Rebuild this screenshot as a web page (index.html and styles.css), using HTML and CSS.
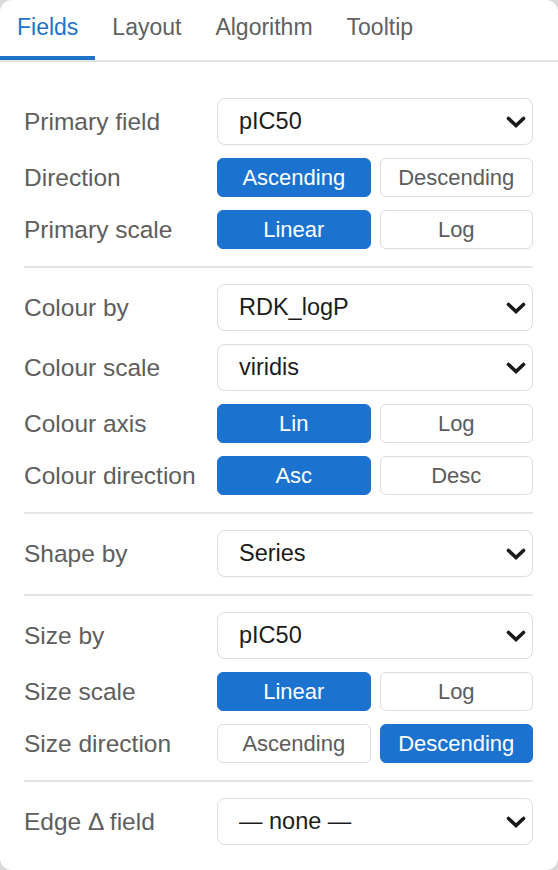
FILE: index.html
```html
<!DOCTYPE html>
<html lang="en">
<head>
<meta charset="utf-8">
<title>Fields</title>
<link rel="stylesheet" href="styles.css">
</head>
<body>
<div class="panel">
  <nav class="tabs">
    <div class="tab active">Fields</div>
    <div class="tab">Layout</div>
    <div class="tab">Algorithm</div>
    <div class="tab">Tooltip</div>
  </nav>
  <div class="form">
    <section class="group">
      <span class="label">Primary field</span>
      <div class="select"><span>pIC50</span><svg class="chev" viewBox="0 0 20 12"><path d="M2.5 2.5 L10 9.5 L17.5 2.5"/></svg></div>
      <span class="label">Direction</span>
      <div class="seg"><button class="btn on">Ascending</button><button class="btn">Descending</button></div>
      <span class="label">Primary scale</span>
      <div class="seg"><button class="btn on">Linear</button><button class="btn">Log</button></div>
    </section>
    <section class="group">
      <span class="label">Colour by</span>
      <div class="select"><span>RDK_logP</span><svg class="chev" viewBox="0 0 20 12"><path d="M2.5 2.5 L10 9.5 L17.5 2.5"/></svg></div>
      <span class="label">Colour scale</span>
      <div class="select"><span>viridis</span><svg class="chev" viewBox="0 0 20 12"><path d="M2.5 2.5 L10 9.5 L17.5 2.5"/></svg></div>
      <span class="label">Colour axis</span>
      <div class="seg"><button class="btn on">Lin</button><button class="btn">Log</button></div>
      <span class="label">Colour direction</span>
      <div class="seg"><button class="btn on">Asc</button><button class="btn">Desc</button></div>
    </section>
    <section class="group">
      <span class="label">Shape by</span>
      <div class="select"><span>Series</span><svg class="chev" viewBox="0 0 20 12"><path d="M2.5 2.5 L10 9.5 L17.5 2.5"/></svg></div>
    </section>
    <section class="group">
      <span class="label">Size by</span>
      <div class="select"><span>pIC50</span><svg class="chev" viewBox="0 0 20 12"><path d="M2.5 2.5 L10 9.5 L17.5 2.5"/></svg></div>
      <span class="label">Size scale</span>
      <div class="seg"><button class="btn on">Linear</button><button class="btn">Log</button></div>
      <span class="label">Size direction</span>
      <div class="seg"><button class="btn">Ascending</button><button class="btn on">Descending</button></div>
    </section>
    <section class="group">
      <span class="label">Edge Δ field</span>
      <div class="select"><span>— none —</span><svg class="chev" viewBox="0 0 20 12"><path d="M2.5 2.5 L10 9.5 L17.5 2.5"/></svg></div>
    </section>
  </div>
</div>
</body>
</html>
```

FILE: styles.css
```css
html, body {
  margin: 0;
  padding: 0;
}
body {
  background: #dadada;
  font-family: "Liberation Sans", Arial, sans-serif;
}
.panel {
  background: #ffffff;
  border-radius: 12px;
  height: 870px;
  box-sizing: border-box;
  overflow: hidden;
}
.tabs {
  display: flex;
  border-bottom: 2px solid #e4e4e4;
}
.tab {
  font-size: 23px;
  line-height: 26px;
  padding: 14px 17px 16px;
  border-bottom: 4px solid transparent;
  color: #616161;
}
.tab.active {
  color: #1f74c8;
  border-bottom-color: #1f74c8;
}
.form {
  padding: 36px 25px 0 24px;
}
.group {
  display: grid;
  grid-template-columns: 193px 1fr;
  row-gap: 13px;
  align-items: center;
  padding: 16px 0 17px;
  border-top: 2px solid #e6e6e6;
}
.group:first-child {
  border-top: none;
  padding-top: 0;
}
.label {
  font-size: 24.5px;
  color: #5e5e5e;
}
.select {
  height: 47px;
  box-sizing: border-box;
  border: 1.5px solid #dddddd;
  border-radius: 8px;
  display: flex;
  align-items: center;
  justify-content: space-between;
  padding: 0 6px 0 21px;
  font-size: 23.5px;
  color: #1c1c1c;
  background: #ffffff;
}
.chev {
  width: 20px;
  height: 12px;
}
.chev path {
  fill: none;
  stroke: #1a1a1a;
  stroke-width: 3.6;
  stroke-linecap: round;
  stroke-linejoin: miter;
}
.seg {
  display: grid;
  grid-template-columns: 1fr 1fr;
  column-gap: 9px;
}
.btn {
  height: 39px;
  box-sizing: border-box;
  border: 1.5px solid #dddddd;
  border-radius: 6px;
  background: #ffffff;
  color: #5c5c5c;
  font-family: "Liberation Sans", Arial, sans-serif;
  font-size: 22px;
  padding: 0;
  margin: 0;
}
.btn.on {
  background: #1b73cf;
  border-color: #1b73cf;
  color: #ffffff;
}
```
